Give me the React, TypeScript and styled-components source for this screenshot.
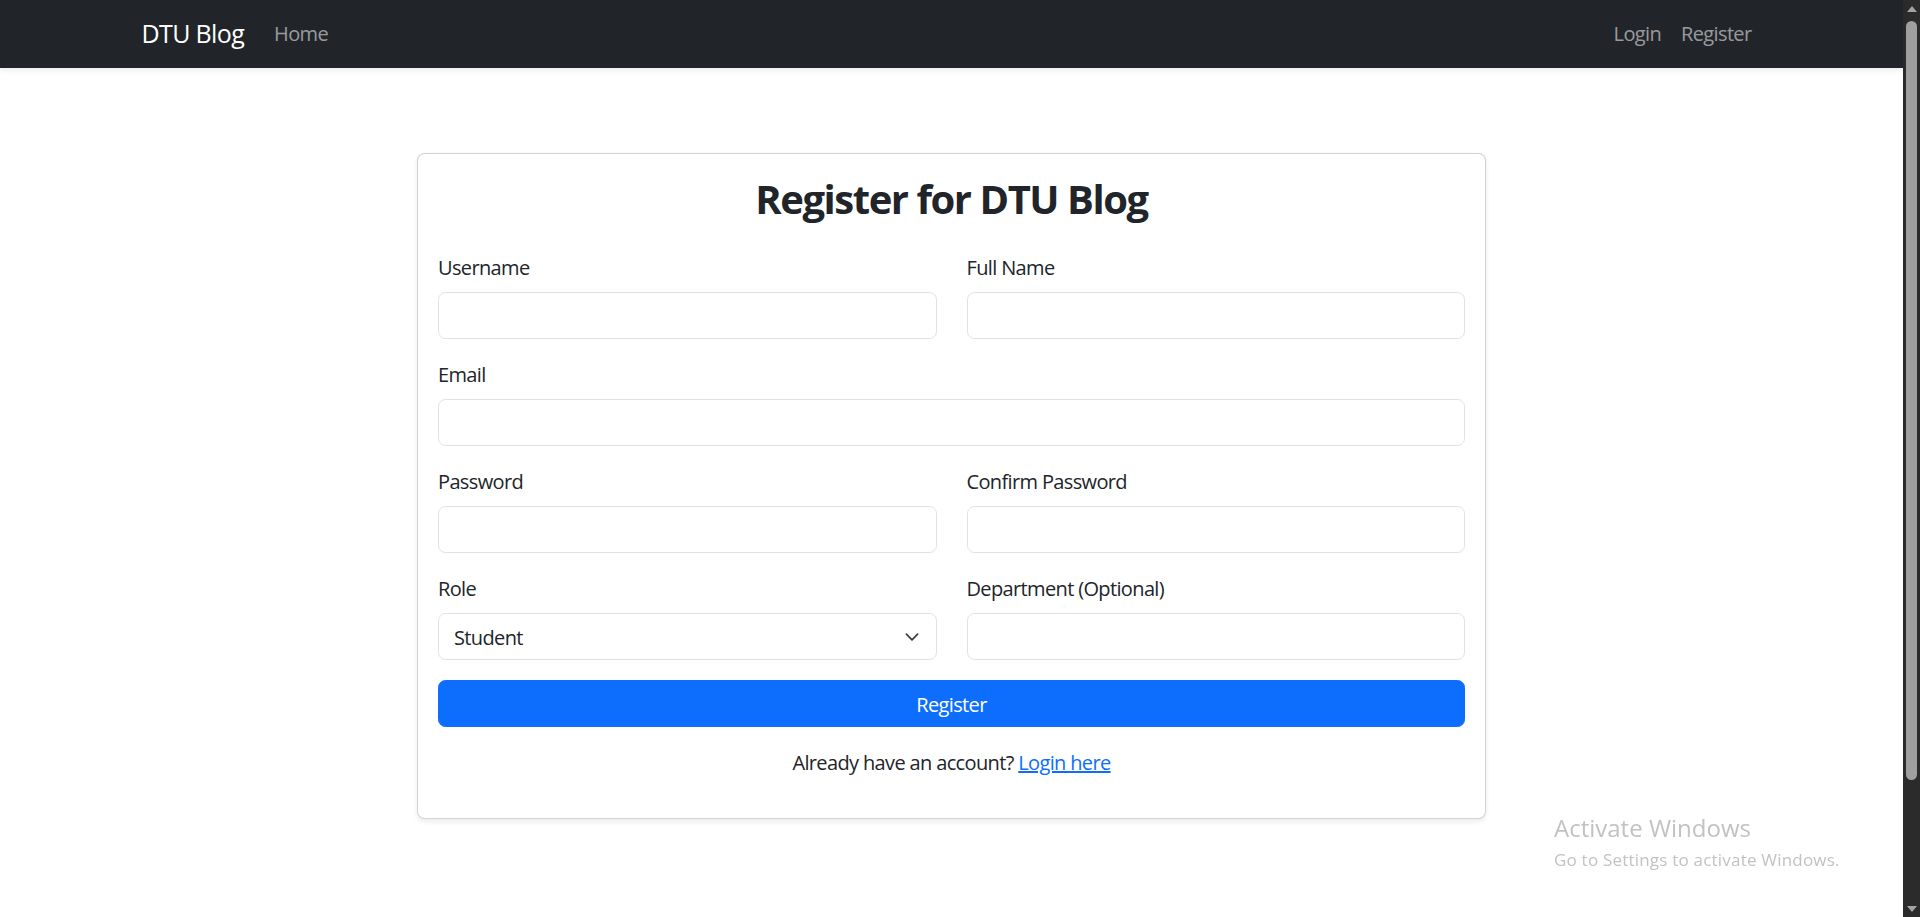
import React from "react";
import styled, { createGlobalStyle } from "styled-components";

const GlobalStyle = createGlobalStyle`
  *, *::before, *::after { box-sizing: border-box; }
  html, body { margin: 0; padding: 0; height: 100%; overflow: hidden; }
  body {
    font-family: "Open Sans", "Noto Sans", "Liberation Sans", sans-serif;
    color: #212529;
    background: #fff;
    letter-spacing: -0.64px;
  }
  #root { height: 100%; }
`;

const Shell = styled.div`
  display: flex;
  height: 100vh;
  width: 100vw;
  overflow: hidden;
`;

const Page = styled.div`
  flex: 1;
  min-width: 0;
  display: flex;
  flex-direction: column;
`;

const NavBar = styled.nav`
  height: 68px;
  flex-shrink: 0;
  background: #212529;
  box-shadow: 0 2.5px 5px rgba(0, 0, 0, 0.075);
  position: relative;
  z-index: 1;
`;

const NavInner = styled.div`
  max-width: 1650px;
  height: 100%;
  margin: 0 auto;
  padding: 0 15px;
  display: flex;
  align-items: center;
`;

const Brand = styled.a`
  font-size: 25px;
  line-height: 37.5px;
  color: #fff;
  text-decoration: none;
  margin-right: 20px;
`;

const NavList = styled.div<{ $end?: boolean }>`
  display: flex;
  align-items: center;
  margin-left: ${(p) => (p.$end ? "auto" : "0")};
`;

const NavLink = styled.a`
  font-size: 20px;
  line-height: 30px;
  padding: 10px;
  color: rgba(255, 255, 255, 0.55);
  text-decoration: none;
`;

const Main = styled.main`
  max-width: 1650px;
  width: 100%;
  margin: 85px auto 0;
  padding: 0 15px;
`;

const Card = styled.section`
  width: 1069px;
  margin: 0 auto;
  background: #fff;
  border: 1px solid rgba(0, 0, 0, 0.175);
  border-radius: 7.5px;
  box-shadow: 0 2.5px 5px rgba(0, 0, 0, 0.075);
  padding: 20px;
`;

const Title = styled.h2`
  margin: 0 0 29px;
  padding-top: 1px;
  font-size: 40px;
  line-height: 48px;
  font-weight: 700;
  letter-spacing: -1.45px;
  text-align: center;
  color: #212529;
`;

const FieldGrid = styled.div`
  display: grid;
  grid-template-columns: 1fr 1fr;
  column-gap: 30px;
  row-gap: 20px;
`;

const Field = styled.div<{ $wide?: boolean }>`
  grid-column: ${(p) => (p.$wide ? "1 / -1" : "auto")};
`;

const Label = styled.label`
  display: block;
  font-size: 20px;
  line-height: 30px;
  padding-top: 1px;
  margin-bottom: 9px;
`;

const TextInput = styled.input`
  display: block;
  width: 100%;
  height: 47px;
  padding: 7.5px 15px;
  font-family: inherit;
  letter-spacing: inherit;
  font-size: 20px;
  line-height: 30px;
  color: #212529;
  background: #fff;
  border: 1px solid #dee2e6;
  border-radius: 7.5px;
  outline: none;
`;

const SelectWrap = styled.div`
  position: relative;
`;

const Select = styled.select`
  display: block;
  width: 100%;
  height: 47px;
  padding: 8px 50px 6px 15px;
  font-family: inherit;
  letter-spacing: inherit;
  font-size: 20px;
  line-height: 30px;
  color: #212529;
  background: #fff;
  border: 1px solid #dee2e6;
  border-radius: 7.5px;
  appearance: none;
  -webkit-appearance: none;
  outline: none;
`;

const Chevron = styled.svg`
  position: absolute;
  right: 15px;
  top: 50%;
  transform: translateY(-50%);
  pointer-events: none;
`;

const SubmitButton = styled.button`
  display: block;
  width: 100%;
  height: 47px;
  margin-top: 20px;
  padding: 8px 15px 6px;
  font-family: inherit;
  letter-spacing: inherit;
  font-size: 20px;
  line-height: 30px;
  color: #fff;
  background: #0d6efd;
  border: 1px solid #0d6efd;
  border-radius: 7.5px;
  cursor: pointer;
`;

const Footer = styled.p`
  margin: 21px 0 20px;
  text-align: center;
  font-size: 20px;
  line-height: 30px;
`;

const FooterLink = styled.a`
  color: #0d6efd;
  text-decoration: underline;
`;

const ScrollTrack = styled.div`
  width: 17px;
  flex-shrink: 0;
  background: #2b2b2b;
  display: flex;
  flex-direction: column;
  align-items: center;
`;

const ScrollArrow = styled.div`
  height: 17px;
  width: 100%;
  display: flex;
  align-items: center;
  justify-content: center;
  flex-shrink: 0;
`;

const ScrollThumb = styled.div`
  width: 11px;
  height: 759px;
  margin-top: 4px;
  border-radius: 6px;
  background: #9f9f9f;
`;

const Spacer = styled.div`
  flex: 1;
`;

const Watermark = styled.div`
  position: fixed;
  left: 1554px;
  top: 812px;
  color: #c2c2c2;
  letter-spacing: 0;
  pointer-events: none;
`;

const WatermarkTitle = styled.div`
  font-size: 24px;
  line-height: 32px;
  font-weight: 400;
`;

const WatermarkSub = styled.div`
  font-size: 17px;
  line-height: 24px;
  margin-top: 4px;
  letter-spacing: 0.012em;
`;

export default function App() {
  return (
    <>
      <GlobalStyle />
      <Shell>
        <Page>
          <NavBar>
            <NavInner>
              <Brand href="#">DTU Blog</Brand>
              <NavList>
                <NavLink href="#">Home</NavLink>
              </NavList>
              <NavList $end>
                <NavLink href="#">Login</NavLink>
                <NavLink href="#">Register</NavLink>
              </NavList>
            </NavInner>
          </NavBar>
          <Main>
            <Card>
              <Title>Register for DTU Blog</Title>
              <form onSubmit={(e) => e.preventDefault()}>
                <FieldGrid>
                  <Field>
                    <Label htmlFor="username">Username</Label>
                    <TextInput id="username" type="text" />
                  </Field>
                  <Field>
                    <Label htmlFor="fullname">Full Name</Label>
                    <TextInput id="fullname" type="text" />
                  </Field>
                  <Field $wide>
                    <Label htmlFor="email">Email</Label>
                    <TextInput id="email" type="email" />
                  </Field>
                  <Field>
                    <Label htmlFor="password">Password</Label>
                    <TextInput id="password" type="password" />
                  </Field>
                  <Field>
                    <Label htmlFor="confirm">Confirm Password</Label>
                    <TextInput id="confirm" type="password" />
                  </Field>
                  <Field>
                    <Label htmlFor="role">Role</Label>
                    <SelectWrap>
                      <Select id="role" defaultValue="student">
                        <option value="student">Student</option>
                        <option value="faculty">Faculty</option>
                      </Select>
                      <Chevron width="20" height="15" viewBox="0 0 16 16" fill="none">
                        <path
                          d="m2 5 6 6 6-6"
                          stroke="#343a40"
                          strokeWidth="1.7"
                          strokeLinecap="round"
                          strokeLinejoin="round"
                        />
                      </Chevron>
                    </SelectWrap>
                  </Field>
                  <Field>
                    <Label htmlFor="department">Department (Optional)</Label>
                    <TextInput id="department" type="text" />
                  </Field>
                </FieldGrid>
                <SubmitButton type="submit">Register</SubmitButton>
              </form>
              <Footer>
                Already have an account? <FooterLink href="#">Login here</FooterLink>
              </Footer>
            </Card>
          </Main>
        </Page>
        <ScrollTrack>
          <ScrollArrow>
            <svg width="10" height="6" viewBox="0 0 10 6">
              <polygon points="5,0 10,6 0,6" fill="#a3a3a3" />
            </svg>
          </ScrollArrow>
          <ScrollThumb />
          <Spacer />
          <ScrollArrow>
            <svg width="10" height="6" viewBox="0 0 10 6">
              <polygon points="0,0 10,0 5,6" fill="#a3a3a3" />
            </svg>
          </ScrollArrow>
        </ScrollTrack>
      </Shell>
      <Watermark>
        <WatermarkTitle>Activate Windows</WatermarkTitle>
        <WatermarkSub>Go to Settings to activate Windows.</WatermarkSub>
      </Watermark>
    </>
  );
}
